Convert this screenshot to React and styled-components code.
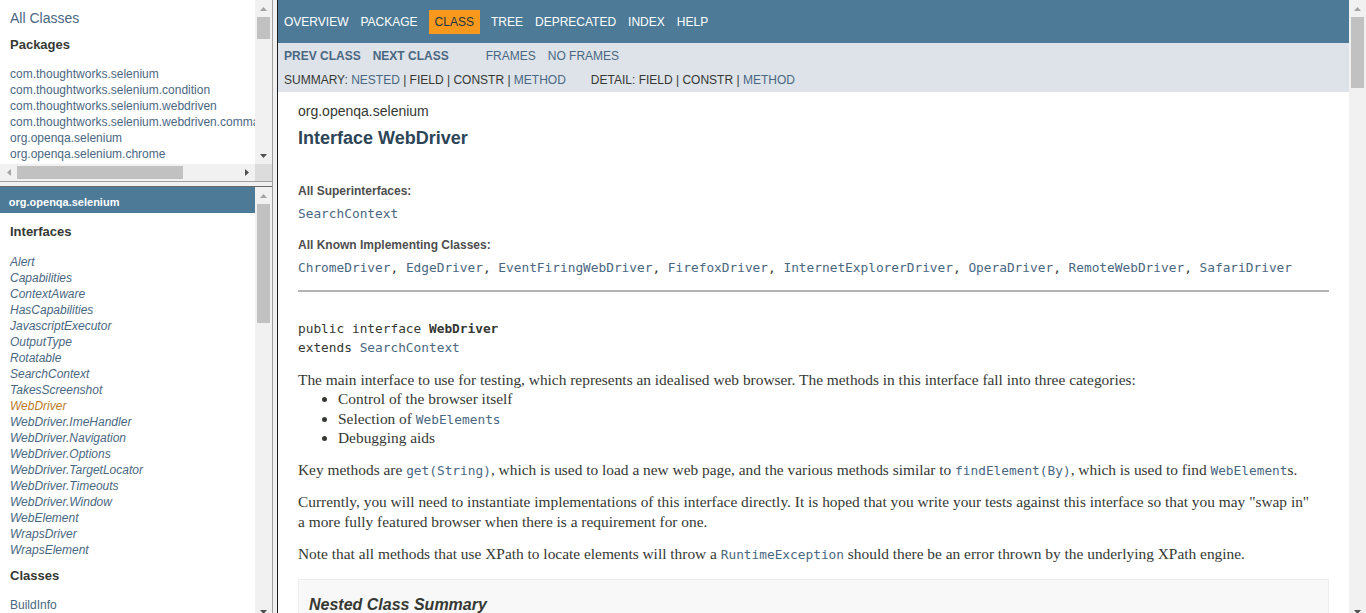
import React from 'react';
import styled, { createGlobalStyle } from 'styled-components';

const GlobalStyle = createGlobalStyle`
  html, body {
    margin: 0;
    padding: 0;
    overflow: hidden;
  }
  body {
    font-family: 'Liberation Sans', Arial, sans-serif;
    color: #353833;
    background: #ffffff;
  }
`;

const packages = [
  'com.thoughtworks.selenium',
  'com.thoughtworks.selenium.condition',
  'com.thoughtworks.selenium.webdriven',
  'com.thoughtworks.selenium.webdriven.commands',
  'org.openqa.selenium',
  'org.openqa.selenium.chrome',
];

const interfaces = [
  'Alert',
  'Capabilities',
  'ContextAware',
  'HasCapabilities',
  'JavascriptExecutor',
  'OutputType',
  'Rotatable',
  'SearchContext',
  'TakesScreenshot',
  'WebDriver',
  'WebDriver.ImeHandler',
  'WebDriver.Navigation',
  'WebDriver.Options',
  'WebDriver.TargetLocator',
  'WebDriver.Timeouts',
  'WebDriver.Window',
  'WebElement',
  'WrapsDriver',
  'WrapsElement',
];

const topNav = ['Overview', 'Package', 'Class', 'Tree', 'Deprecated', 'Index', 'Help'];

const implementing = [
  'ChromeDriver',
  'EdgeDriver',
  'EventFiringWebDriver',
  'FirefoxDriver',
  'InternetExplorerDriver',
  'OperaDriver',
  'RemoteWebDriver',
  'SafariDriver',
];

function Arrow({ dir, dark }) {
  const pts = {
    up: '0,4 3.5,0 7,4',
    down: '0,0 3.5,4 7,0',
    left: '4,0 0,3.5 4,7',
    right: '0,0 4,3.5 0,7',
  }[dir];
  const horiz = dir === 'left' || dir === 'right';
  return (
    <svg width={horiz ? 4 : 7} height={horiz ? 7 : 4} viewBox={horiz ? '0 0 4 7' : '0 0 7 4'}>
      <polygon points={pts} fill={dark ? '#505050' : '#a3a3a3'} />
    </svg>
  );
}

function VScroll({ start, size }) {
  return (
    <VBar>
      <ArrowBox>
        <Arrow dir="up" />
      </ArrowBox>
      <VTrack>
        <VThumb $start={start} $size={size} />
      </VTrack>
      <ArrowBox>
        <Arrow dir="down" dark />
      </ArrowBox>
    </VBar>
  );
}

function HScroll({ start, size }) {
  return (
    <HBar>
      <ArrowBox>
        <Arrow dir="left" />
      </ArrowBox>
      <HTrack>
        <HThumb $start={start} $size={size} />
      </HTrack>
      <ArrowBox>
        <Arrow dir="right" dark />
      </ArrowBox>
    </HBar>
  );
}

function App() {
  return (
    <Page>
      <GlobalStyle />
      <LeftColumn>
        <TopFrame>
          <FrameBody>
            <FrameContent>
              <AllClasses>All Classes</AllClasses>
              <SideHeading $top={11} $bottom={13}>
                Packages
              </SideHeading>
              <SideList>
                {packages.map((p) => (
                  <SideItem key={p}>{p}</SideItem>
                ))}
              </SideList>
            </FrameContent>
            <VScroll start={0} size={22} />
          </FrameBody>
          <HRow>
            <HScroll start={0} size={166} />
            <Corner />
          </HRow>
        </TopFrame>
        <HSplit />
        <BottomFrame>
          <FrameContent>
            <PackageBar>org.openqa.selenium</PackageBar>
            <SideHeading $top={11} $bottom={14}>
              Interfaces
            </SideHeading>
            <SideList>
              {interfaces.map((i) => (
                <SideItem key={i} $italic $active={i === 'WebDriver'}>
                  {i}
                </SideItem>
              ))}
            </SideList>
            <SideHeading $top={11} $bottom={13}>
              Classes
            </SideHeading>
            <SideList>
              <SideItem>BuildInfo</SideItem>
            </SideList>
          </FrameContent>
          <VScroll start={0} size={119} />
        </BottomFrame>
      </LeftColumn>
      <VSplit />
      <MainFrame>
        <MainScroll>
          <TopNav>
            {topNav.map((n) => (
              <NavItem key={n} $current={n === 'Class'}>
                {n}
              </NavItem>
            ))}
          </TopNav>
          <SubNav>
            <SubRow>
              <SubGroup>
                <SubLink $bold>Prev Class</SubLink>
                <SubLink $bold>Next Class</SubLink>
              </SubGroup>
              <SubGroup>
                <SubLink>Frames</SubLink>
                <SubLink>No Frames</SubLink>
              </SubGroup>
            </SubRow>
            <SummaryRow>
              <SummaryGroup>
                Summary:&nbsp;<NavA>Nested</NavA>&nbsp;|&nbsp;Field&nbsp;|&nbsp;Constr&nbsp;|&nbsp;<NavA>Method</NavA>
              </SummaryGroup>
              <SummaryGroup>
                Detail:&nbsp;Field&nbsp;|&nbsp;Constr&nbsp;|&nbsp;<NavA>Method</NavA>
              </SummaryGroup>
            </SummaryRow>
          </SubNav>
          <Content>
            <SubTitle>org.openqa.selenium</SubTitle>
            <Title>Interface WebDriver</Title>
            <Dt $top={35}>All Superinterfaces:</Dt>
            <Dd>
              <CodeLink>SearchContext</CodeLink>
            </Dd>
            <Dt $top={16}>All Known Implementing Classes:</Dt>
            <Dd>
              {implementing.map((c, i) => (
                <React.Fragment key={c}>
                  <CodeLink>{c}</CodeLink>
                  {i < implementing.length - 1 ? ', ' : ''}
                </React.Fragment>
              ))}
            </Dd>
            <Rule />
            <Signature>
              public interface <b>WebDriver</b>
              {'\n'}extends <CodeLink>SearchContext</CodeLink>
            </Signature>
            <Block>
              The main interface to use for testing, which represents an idealised web browser. The
              methods in this interface fall into three categories:
              <Bullets>
                <li>Control of the browser itself</li>
                <li>
                  Selection of <InlineCode>WebElements</InlineCode>
                </li>
                <li>Debugging aids</li>
              </Bullets>
            </Block>
            <Block>
              Key methods are <InlineCode>get(String)</InlineCode>, which is used to load a new web
              page, and the various methods similar to <InlineCode>findElement(By)</InlineCode>,
              which is used to find <InlineCode>WebElement</InlineCode>s.
            </Block>
            <Block>
              Currently, you will need to instantiate implementations of this interface directly. It
              is hoped that you write your tests against this interface so that you may "swap in"
              a{'\u00a0'}more fully featured browser when there is a requirement for one.
            </Block>
            <Block>
              Note that all methods that use XPath to locate elements will throw a{' '}
              <InlineCode>RuntimeException</InlineCode> should there be an error thrown by the
              underlying XPath engine.
            </Block>
            <SummaryBox>
              <SummaryTitle>Nested Class Summary</SummaryTitle>
            </SummaryBox>
          </Content>
        </MainScroll>
        <VScroll start={0} size={71} />
      </MainFrame>
    </Page>
  );
}

const Page = styled.div`
  display: grid;
  grid-template-columns: 272px 6px 1fr;
  width: 100vw;
  height: 613px;
  overflow: hidden;
`;

const LeftColumn = styled.div`
  display: flex;
  flex-direction: column;
  min-height: 0;
`;

const TopFrame = styled.div`
  height: 181px;
  display: flex;
  flex-direction: column;
  flex-shrink: 0;
`;

const FrameBody = styled.div`
  flex: 1;
  display: flex;
  min-height: 0;
`;

const FrameContent = styled.div`
  flex: 1;
  min-width: 0;
  overflow: hidden;
`;

const BottomFrame = styled.div`
  flex: 1;
  display: flex;
  min-height: 0;
`;

const HRow = styled.div`
  display: flex;
  height: 17px;
`;

const Corner = styled.div`
  width: 17px;
  background: #dcdcdc;
`;

const HSplit = styled.div`
  height: 6px;
  flex-shrink: 0;
  box-sizing: border-box;
  background: #f0f0f0;
  border-top: 1px solid #a0a0a0;
  border-bottom: 1px solid #696969;
`;

const VSplit = styled.div`
  box-sizing: border-box;
  background: #f0f0f0;
  border-left: 1px solid #a0a0a0;
  border-right: 1px solid #1e1e1e;
`;

const VBar = styled.div`
  width: 17px;
  flex-shrink: 0;
  background: #f1f1f1;
  display: flex;
  flex-direction: column;
`;

const HBar = styled.div`
  flex: 1;
  height: 17px;
  background: #f1f1f1;
  display: flex;
`;

const ArrowBox = styled.div`
  width: 17px;
  height: 17px;
  flex-shrink: 0;
  display: flex;
  align-items: center;
  justify-content: center;
`;

const VTrack = styled.div`
  flex: 1;
  display: flex;
  flex-direction: column;
  align-items: center;
`;

const VThumb = styled.div`
  width: 13px;
  margin-top: ${(p) => p.$start}px;
  height: ${(p) => p.$size}px;
  background: #c1c1c1;
`;

const HTrack = styled.div`
  flex: 1;
  display: flex;
  align-items: center;
`;

const HThumb = styled.div`
  height: 13px;
  margin-left: ${(p) => p.$start}px;
  width: ${(p) => p.$size}px;
  background: #c1c1c1;
`;

const AllClasses = styled.div`
  margin: 10px 10px 0;
  font-size: 14px;
  line-height: 16px;
  color: #4a6782;
`;

const SideHeading = styled.h2`
  margin: ${(p) => p.$top}px 10px ${(p) => p.$bottom}px;
  font-size: 13px;
  line-height: 15px;
  font-weight: bold;
  color: #353833;
`;

const SideList = styled.ul`
  list-style: none;
  margin: 0 10px;
  padding: 0;
`;

const SideItem = styled.li`
  padding-top: 2px;
  font-size: 12px;
  line-height: 14px;
  white-space: nowrap;
  color: ${(p) => (p.$active ? '#bb7a2a' : '#4a6782')};
  font-style: ${(p) => (p.$italic ? 'italic' : 'normal')};
`;

const PackageBar = styled.h1`
  margin: 0;
  background: #4d7a97;
  color: #ffffff;
  font-size: 11px;
  font-weight: bold;
  line-height: 13px;
  padding: 8.8px 5.5px 4.4px 8.8px;
`;

const MainFrame = styled.div`
  display: flex;
  min-width: 0;
`;

const MainScroll = styled.div`
  flex: 1;
  min-width: 0;
  overflow: hidden;
`;

const TopNav = styled.ul`
  display: flex;
  margin: 0;
  padding: 10px 0 0;
  height: 33px;
  list-style: none;
  background: #4d7a97;
  font-size: 12px;
`;

const NavItem = styled.li`
  padding: 5px 6px;
  height: 14px;
  line-height: 14px;
  text-transform: uppercase;
  color: ${(p) => (p.$current ? '#253441' : '#ffffff')};
  background: ${(p) => (p.$current ? '#f8981d' : 'transparent')};
  margin: ${(p) => (p.$current ? '0 5px' : '0')};
`;

const SubNav = styled.div`
  background: #dee3e9;
  font-size: 12px;
  padding: 1px 0 5px;
`;

const SubRow = styled.div`
  display: flex;
  padding-bottom: 5px;
`;

const SubGroup = styled.div`
  display: flex;
  margin-right: 25px;
`;

const SubLink = styled.div`
  padding: 5px 6px;
  line-height: 14px;
  text-transform: uppercase;
  color: #4a6782;
  font-weight: ${(p) => (p.$bold ? 'bold' : 'normal')};
`;

const SummaryRow = styled.div`
  display: flex;
  padding-left: 6px;
  line-height: 14px;
  text-transform: uppercase;
  color: #353833;
`;

const SummaryGroup = styled.div`
  margin-right: 25px;
  white-space: nowrap;
`;

const NavA = styled.span`
  color: #4a6782;
`;

const Content = styled.div`
  padding: 11px 20px 0;
`;

const SubTitle = styled.div`
  font-size: 14px;
  line-height: 16px;
`;

const Title = styled.h2`
  margin: 8px 0 0;
  font-size: 18px;
  line-height: 22px;
  color: #2c4557;
`;

const Dt = styled.div`
  margin-top: ${(p) => p.$top}px;
  font-size: 12px;
  line-height: 14px;
  font-weight: bold;
  color: #4e4e4e;
`;

const Dd = styled.div`
  margin-top: 8px;
  font-family: 'DejaVu Sans Mono', monospace;
  font-size: 12.8px;
  line-height: 16px;
  white-space: nowrap;
`;

const CodeLink = styled.span`
  color: #4a6782;
`;

const Rule = styled.hr`
  margin: 14px 0 0;
  border: 0;
  border-top: 2px solid #b4b4b4;
  height: 0;
`;

const Signature = styled.pre`
  margin: 27px 0 0;
  font-family: 'DejaVu Sans Mono', monospace;
  font-size: 12.8px;
  line-height: 19px;
  color: #353833;

  b {
    font-weight: bold;
  }
`;

const Block = styled.div`
  margin-top: 12.5px;
  font-family: 'Liberation Serif', Georgia, serif;
  font-size: 15.4px;
  line-height: 19.5px;
  color: #353833;
`;

const Bullets = styled.ul`
  margin: 0;
  padding-left: 40px;
`;

const InlineCode = styled.code`
  font-family: 'DejaVu Sans Mono', monospace;
  font-size: 12.8px;
  line-height: 1;
  color: #4a6782;
`;

const SummaryBox = styled.div`
  margin-top: 16px;
  padding: 0 20px 5px 10px;
  border: 1px solid #ededed;
  background: #f8f8f8;
`;

const SummaryTitle = styled.h3`
  margin: 15px 0 0;
  font-size: 16px;
  line-height: 19px;
  font-style: italic;
  font-weight: bold;
  color: #353833;
`;

export default App;
